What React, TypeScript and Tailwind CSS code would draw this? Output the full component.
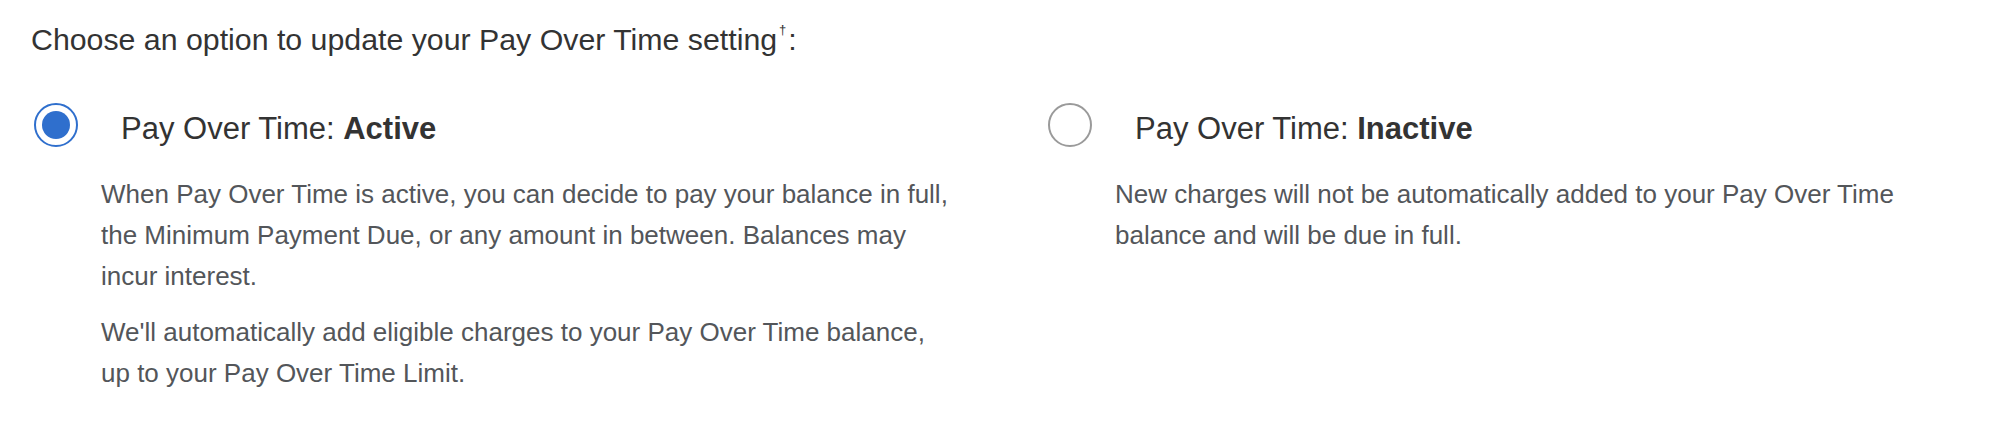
import { useState } from "react";

type Option = "active" | "inactive";

function Radio({ checked }: { checked: boolean }) {
  return checked ? (
    <span className="flex h-[44px] w-[44px] shrink-0 items-center justify-center rounded-full border-2 border-[#2f6fcd] bg-white">
      <span className="h-[28px] w-[28px] rounded-full bg-[#2f6fcd]" />
    </span>
  ) : (
    <span className="h-[44px] w-[44px] shrink-0 rounded-full border-2 border-[#9a9a9a] bg-white" />
  );
}

export default function App() {
  const [choice, setChoice] = useState<Option>("active");

  return (
    <div
      className="min-h-screen w-full bg-white pl-[30px] pt-[20px] text-[#333333]"
      style={{ fontFamily: '"Liberation Sans", Arial, sans-serif' }}
    >
      <p className="pl-[1px] text-[30.3px] leading-[40px]">
        Choose an option to update your Pay Over Time setting
        <sup className="-top-[16px] mx-[2px] text-[13px]">†</sup>:
      </p>

      <div className="mt-[43px] grid grid-cols-[1014px_1fr]">
        {/* Actif */}
        <div>
          <button
            type="button"
            onClick={() => setChoice("active")}
            className="ml-[4px] flex items-start text-left"
          >
            <Radio checked={choice === "active"} />
            <span className="ml-[43px] mt-[6px] text-[31px] leading-[40px]">
              Pay Over Time: <span className="font-bold">Active</span>
            </span>
          </button>
          <div className="ml-[71px] mt-[25px] w-[856px] text-[26px] leading-[41px] text-[#53565a]">
            <p>
              When Pay Over Time is active, you can decide to pay your balance in full,
              the Minimum Payment Due, or any amount in between. Balances may incur
              interest.
            </p>
            <p className="mt-[15px]">
              We'll automatically add eligible charges to your Pay Over Time balance,
              up to your Pay Over Time Limit.
            </p>
          </div>
        </div>

        {/* Inactif */}
        <div>
          <button
            type="button"
            onClick={() => setChoice("inactive")}
            className="ml-[4px] flex items-start text-left"
          >
            <Radio checked={choice === "inactive"} />
            <span className="ml-[43px] mt-[6px] text-[31px] leading-[40px]">
              Pay Over Time: <span className="font-bold">Inactive</span>
            </span>
          </button>
          <div className="ml-[71px] mt-[25px] w-[856px] text-[26px] leading-[41px] text-[#53565a]">
            <p>
              New charges will not be automatically added to your Pay Over Time
              balance and will be due in full.
            </p>
          </div>
        </div>
      </div>
    </div>
  );
}
